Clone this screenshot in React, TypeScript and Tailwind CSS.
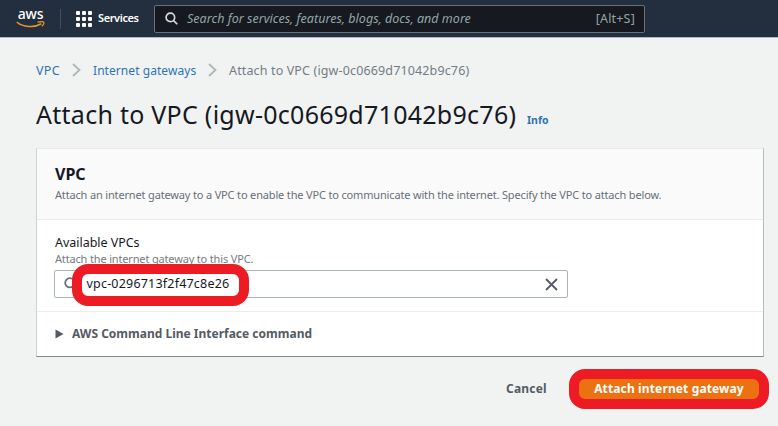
import React from "react";

function AwsLogo() {
  return (
    <div className="flex w-[29px] shrink-0 flex-col items-center">
      <span className="h-[13px] text-[14px] leading-[9px] font-medium tracking-[-0.2px] text-white">aws</span>
      <svg width="29" height="8" viewBox="0 0 29 8" fill="none" className="-mt-px">
        <path d="M0.8 1C7 6.600 18.500 6.800 25.300 2.800" stroke="#e8942f" strokeWidth="1.600" />
        <path d="M21.500 1.200C24 0.600 27 0.500 27.700 1.100C28.200 1.800 27.300 4 25.800 5.400" stroke="#e8942f" strokeWidth="1.200" />
      </svg>
    </div>
  );
}

function GridIcon() {
  return (
    <div className="grid grid-cols-3 gap-[2px]">
      {Array.from({ length: 9 }, (_, i) => (
        <span key={i} className="size-[4px] rounded-[1px] bg-white" />
      ))}
    </div>
  );
}

function Chevron() {
  return (
    <svg width="9" height="14" viewBox="0 0 9 14" fill="none" className="shrink-0">
      <path d="M1 1L7.500 7L1 13" stroke="#aab7b8" strokeWidth="1.800" />
    </svg>
  );
}

function SearchIcon({ size, color }: { size: number; color: string }) {
  return (
    <svg width={size} height={size} viewBox="0 0 14 14" fill="none" stroke={color} strokeWidth="1.800" className="shrink-0">
      <circle cx="5.800" cy="5.800" r="4.600" />
      <path d="M9.200 9.200L13.200 13.200" />
    </svg>
  );
}

export default function App() {
  return (
    <div className="h-[426px] w-[778px] overflow-hidden bg-[#f1f3f3] font-['Noto_Sans',sans-serif] whitespace-nowrap text-[#16191f]">
      <header className="flex h-[38px] items-center border-b border-[#aeb9c4] bg-[#232f3e] pl-[16px]">
        <AwsLogo />
        <div className="ml-[15px] h-[20px] w-px bg-[#414d5c]" />
        <div className="ml-[15px] flex items-center">
          <GridIcon />
          <span className="ml-[6px] w-[42px] text-[11px] font-semibold tracking-[-0.4px] text-white">Services</span>
        </div>
        <div className="ml-[14px] flex h-[28px] w-[491px] items-center rounded-[2px] border border-[#687078] bg-[#16191f] pr-[9px] pl-[10px]">
          <SearchIcon size={13} color="#d5dbdb" />
          <span className="ml-[9px] pt-px text-[12.5px] tracking-[0.02px] text-[#95a5a6] italic">Search for services, features, blogs, docs, and more</span>
          <span className="ml-auto pt-px text-[12.5px] tracking-[0.2px] text-[#95a5a6]">[Alt+S]</span>
        </div>
      </header>

      <main className="pl-[36px]">
        <nav className="mt-[23px] flex h-[18px] items-center text-[12.5px] leading-[18px]">
          <span className="w-[36px] pt-px tracking-[0.3px] text-[#2e73b2]">VPC</span>
          <Chevron />
          <span className="ml-[12px] w-[115px] pt-px text-[12px] tracking-[0.06px] text-[#2e73b2]">Internet gateways</span>
          <Chevron />
          <span className="ml-[12px] pt-px tracking-[0.14px] text-[#747c83]">Attach to VPC (igw-0c0669d71042b9c76)</span>
        </nav>

        <div className="mt-[19px] flex h-[32px] items-baseline leading-[32px]">
          <h1 className="w-[491px] text-[25px] tracking-[0.27px]">Attach to VPC (igw-0c0669d71042b9c76)</h1>
          <span className="text-[10.5px] font-bold text-[#2e73b2]">Info</span>
        </div>

        <section className="mt-[18px] h-[209px] w-[728px] border border-t-[#e6eaea] border-r-[#b5bebe] border-b-[#7f8b8d] border-l-[#cdd3d3] bg-white">
          <div className="h-[71px] border-b border-[#eaeded] bg-[#fafafa] pt-[14px] pl-[18px]">
            <h2 className="text-[16px] leading-[22px] font-bold">VPC</h2>
            <p className="mt-[2px] text-[11px] leading-[16px] tracking-[-0.16px] text-[#687078]">
              Attach an internet gateway to a VPC to enable the VPC to communicate with the internet. Specify the VPC to attach below.
            </p>
          </div>
          <div className="h-[92px] border-b border-[#eaeded] pt-[14px] pl-[17px]">
            <div className="pl-px text-[12.5px] leading-[18px] tracking-[-0.03px]">Available VPCs</div>
            <div className="pl-px text-[11px] leading-[14px] tracking-[-0.16px] text-[#747c83]">Attach the internet gateway to this VPC.</div>
            <div className="relative mt-[4px] flex h-[28px] w-[514px] items-center rounded-[2px] border border-[#aab7b8] bg-white pr-[9px] pl-[9px]">
              <SearchIcon size={14} color="#687078" />
              <span className="ml-[8.5px] text-[12.5px] tracking-[0.2px]">vpc-0296713f2f47c8e26</span>
              <svg width="13" height="13" viewBox="0 0 13 13" className="ml-auto" stroke="#545b64" strokeWidth="1.800">
                <path d="M1 1L12 12M12 1L1 12" />
              </svg>
              <div className="absolute top-[-7px] left-[17px] h-[42px] w-[177px] rounded-[16px] border-[10px] border-[#ed1c24]" />
            </div>
          </div>
          <div className="flex h-[44px] items-center pl-[18px]">
            <svg width="9" height="10" viewBox="0 0 9 10" fill="#545b64">
              <path d="M0.500 0.500L8.500 5L0.500 9.500Z" />
            </svg>
            <span className="ml-[8px] text-[12px] font-bold text-[#545b64]">AWS Command Line Interface command</span>
          </div>
        </section>

        <div className="mt-[12px] flex h-[40px] items-center pl-[470px] text-[12px] font-bold">
          <button className="w-[63px] text-left tracking-[0.2px] text-[#545b64]">Cancel</button>
          <button className="flex h-[40px] w-[200px] items-center justify-center rounded-[16px] border-[10px] border-[#ed1c24] bg-[#ec7211] pb-px tracking-[0.13px] text-white">
            Attach internet gateway
          </button>
        </div>
      </main>
    </div>
  );
}
